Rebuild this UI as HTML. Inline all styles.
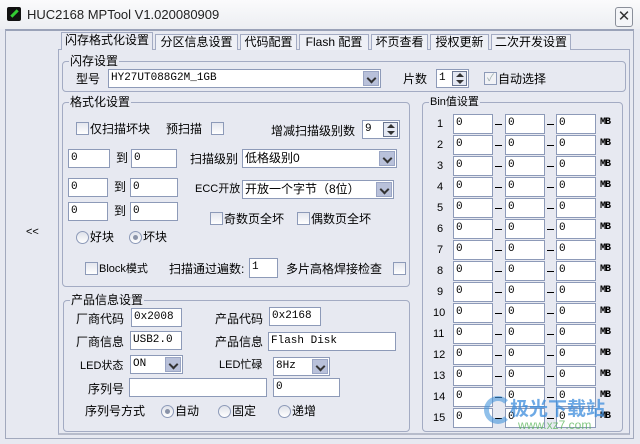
<!DOCTYPE html>
<html><head><meta charset="utf-8"><style>
*{box-sizing:border-box;margin:0;padding:0}
body{width:640px;height:444px;overflow:hidden;background:#e7e9f1;font-family:"Liberation Sans","Noto Sans CJK SC",sans-serif;font-size:12px;color:#000;position:relative}
.a{position:absolute;white-space:nowrap}
.t{position:absolute;white-space:nowrap;line-height:14px;font-size:12px}
.in{position:absolute;background:#fff;border:1px solid #8d9ab8;font-family:"Liberation Mono","Noto Sans CJK SC",monospace;font-size:11px;line-height:16px;padding-left:2px;overflow:hidden;white-space:nowrap}
.gb{position:absolute;border:1px solid #a3abc3;border-radius:4px}
.gl{position:absolute;background:#e7e9f1;padding:0 1px;line-height:14px;top:-8px;left:6px;white-space:nowrap}
.cb{position:absolute;width:13px;height:13px;border:1px solid #8d9ab8;background:linear-gradient(#e4e6ee,#fff)}
.rd{position:absolute;width:13px;height:13px;border:1px solid #8d9ab8;border-radius:50%;background:linear-gradient(#dfe2ea,#fff)}
.rd.on::after{content:"";position:absolute;left:3px;top:3px;width:5px;height:5px;border-radius:50%;background:#8a93a8}
.dd{position:absolute;right:1px;top:1px;bottom:1px;width:16px;background:#b9c1da;border:1px solid #9aa5c4}
.dd::after{content:"";position:absolute;left:4px;top:3px;width:5px;height:5px;border-right:2px solid #333;border-bottom:2px solid #333;transform:rotate(45deg)}
.sp{position:absolute;right:1px;top:1px;bottom:1px;width:15px;border:1px solid #6a7690;background:#e4e8f2}
.sp::before{content:"";position:absolute;left:3px;top:1px;border:4px solid transparent;border-bottom:4px solid #333;border-top:0}
.sp::after{content:"";position:absolute;left:3px;bottom:1px;border:4px solid transparent;border-top:4px solid #333;border-bottom:0}
.tab{position:absolute;top:34px;height:16px;border:1px solid #a3abc3;border-bottom:none;background:#eef0f6;line-height:15px;text-align:center;font-size:12px;white-space:nowrap;overflow:hidden}
.mb{position:absolute;font-family:"Liberation Mono",monospace;font-size:10px;font-weight:bold;letter-spacing:-1px}
.ds{position:absolute;width:7px;height:1px;background:#000}
</style></head><body>
<div class="a" style="left:0;top:0;width:640px;height:29px;background:linear-gradient(#fbfbfc,#eceef2)"></div>
<div class="a" style="left:7px;top:7px;width:14px;height:14px;background:#111;border-radius:2px"><div style="position:absolute;left:3px;top:5px;width:9px;height:3px;background:#3c3;transform:rotate(-45deg)"></div></div>
<div class="a" style="left:27px;top:7px;font-size:13px;color:#222;line-height:16px">HUC2168 MPTool V1.020080909</div>
<div class="a" style="left:615px;top:7px;width:18px;height:20px;border:1px solid #8a8f9a;border-radius:3px;background:#f4f5f8;text-align:center;line-height:18px;font-size:15px;color:#333">✕</div>
<div class="a" style="left:5px;top:29px;width:629px;height:410px;border:1px solid #a2a9bd;border-top:2px solid #9aa2b8"></div>
<div class="a" style="left:26px;top:226px;font-size:11px">&lt;&lt;</div>

<div class="a" style="left:58px;top:49px;width:572px;height:386px;border:1px solid #a3abc3;border-bottom:2px solid #b7bccb"></div>
<div class="tab" style="left:61px;width:92px;top:32px;height:18px;background:#e7e9f1">闪存格式化设置</div>
<div class="tab" style="left:155px;width:83px">分区信息设置</div>
<div class="tab" style="left:240px;width:57px">代码配置</div>
<div class="tab" style="left:299px;width:70px">Flash 配置</div>
<div class="tab" style="left:371px;width:57px">坏页查看</div>
<div class="tab" style="left:430px;width:59px">授权更新</div>
<div class="tab" style="left:491px;width:80px">二次开发设置</div>

<div class="gb" style="left:62px;top:61px;width:564px;height:31px"><span class="gl">闪存设置</span></div>
<div class="t" style="left:76px;top:72px">型号</div>
<div class="in" style="left:108px;top:69px;width:273px;height:19px">HY27UT088G2M_1GB<span class="dd"></span></div>
<div class="t" style="left:403px;top:72px">片数</div>
<div class="in" style="left:436px;top:69px;width:33px;height:19px">1<span class="sp"></span></div>
<div class="cb" style="left:484px;top:72px;background:#f1f2f6;color:#9aa;font-size:10px;line-height:11px;text-align:center">✓</div>
<div class="t" style="left:498px;top:72px">自动选择</div>

<div class="gb" style="left:62px;top:102px;width:348px;height:185px"><span class="gl">格式化设置</span></div>
<div class="cb" style="left:76px;top:122px"></div><div class="t" style="left:90px;top:122px">仅扫描坏块</div>
<div class="t" style="left:166px;top:122px">预扫描</div><div class="cb" style="left:211px;top:122px"></div>
<div class="t" style="left:271px;top:124px">增减扫描级别数</div>
<div class="in" style="left:362px;top:120px;width:38px;height:19px">9<span class="sp"></span></div>
<div class="in" style="left:68px;top:149px;width:42px;height:19px">0</div><div class="t" style="left:116px;top:151px">到</div><div class="in" style="left:131px;top:149px;width:46px;height:19px">0</div>
<div class="in" style="left:68px;top:178px;width:40px;height:19px">0</div><div class="t" style="left:114px;top:180px">到</div><div class="in" style="left:130px;top:178px;width:48px;height:19px">0</div>
<div class="in" style="left:68px;top:202px;width:40px;height:19px">0</div><div class="t" style="left:114px;top:204px">到</div><div class="in" style="left:130px;top:202px;width:48px;height:19px">0</div>
<div class="t" style="left:190px;top:152px">扫描级别</div>
<div class="in" style="left:242px;top:149px;width:155px;height:19px;font-family:'Liberation Sans','Noto Sans CJK SC',sans-serif;font-size:12px">低格级别0<span class="dd"></span></div>
<div class="t" style="left:195px;top:182px;font-size:11px">ECC开放</div>
<div class="in" style="left:242px;top:180px;width:152px;height:19px;font-family:'Liberation Sans','Noto Sans CJK SC',sans-serif;font-size:12px">开放一个字节（8位）<span class="dd"></span></div>
<div class="cb" style="left:210px;top:212px"></div><div class="t" style="left:224px;top:212px">奇数页全坏</div>
<div class="cb" style="left:297px;top:212px"></div><div class="t" style="left:311px;top:212px">偶数页全坏</div>
<div class="rd" style="left:76px;top:231px"></div><div class="t" style="left:90px;top:230px">好块</div>
<div class="rd on" style="left:129px;top:231px"></div><div class="t" style="left:143px;top:230px">坏块</div>
<div class="cb" style="left:85px;top:262px"></div><div class="t" style="left:99px;top:262px;font-size:11px">Block模式</div>
<div class="t" style="left:169px;top:262px">扫描通过遍数:</div>
<div class="in" style="left:249px;top:258px;width:29px;height:20px">1</div>
<div class="t" style="left:286px;top:262px">多片高格焊接检查</div><div class="cb" style="left:393px;top:262px"></div>

<div class="gb" style="left:63px;top:300px;width:347px;height:132px"><span class="gl">产品信息设置</span></div>
<div class="t" style="left:76px;top:312px">厂商代码</div><div class="in" style="left:131px;top:308px;width:51px;height:19px">0x2008</div>
<div class="t" style="left:215px;top:312px">产品代码</div><div class="in" style="left:269px;top:307px;width:52px;height:19px">0x2168</div>
<div class="t" style="left:76px;top:335px">厂商信息</div><div class="in" style="left:130px;top:331px;width:52px;height:19px">USB2.0</div>
<div class="t" style="left:215px;top:335px">产品信息</div><div class="in" style="left:268px;top:332px;width:128px;height:19px">Flash Disk</div>
<div class="t" style="left:80px;top:359px;font-size:11px">LED状态</div><div class="in" style="left:130px;top:355px;width:53px;height:19px">ON<span class="dd"></span></div>
<div class="t" style="left:219px;top:358px;font-size:11px">LED忙碌</div><div class="in" style="left:273px;top:357px;width:57px;height:19px">8Hz<span class="dd"></span></div>
<div class="t" style="left:88px;top:382px">序列号</div><div class="in" style="left:129px;top:378px;width:138px;height:19px"></div><div class="in" style="left:273px;top:378px;width:67px;height:19px">0</div>
<div class="t" style="left:85px;top:404px">序列号方式</div>
<div class="rd on" style="left:161px;top:405px"></div><div class="t" style="left:175px;top:404px">自动</div>
<div class="rd" style="left:218px;top:405px"></div><div class="t" style="left:232px;top:404px">固定</div>
<div class="rd" style="left:278px;top:405px"></div><div class="t" style="left:292px;top:404px">递增</div>

<div class="gb" style="left:422px;top:102px;width:201px;height:330px"><span class="gl" style="font-size:11px">Bin值设置</span></div>
<div id="bins"></div>
<script>
var h='';for(var i=0;i<15;i++){var y=114+i*21;h+='<div class="t" style="left:'+(i<9?437:433)+'px;top:'+(y+3)+'px;font-size:11px">'+(i+1)+'</div>'+
'<div class="in" style="left:453px;top:'+y+'px;width:40px;height:20px">0</div><div class="ds" style="left:495px;top:'+(y+10)+'px"></div>'+
'<div class="in" style="left:505px;top:'+y+'px;width:40px;height:20px">0</div><div class="ds" style="left:547px;top:'+(y+10)+'px"></div>'+
'<div class="in" style="left:556px;top:'+y+'px;width:40px;height:20px">0</div><div class="mb" style="left:600px;top:'+(y+3)+'px">MB</div>';}
document.getElementById('bins').innerHTML=h;
</script>
<div class="a" style="left:510px;top:394px;font-size:19px;font-weight:bold;color:rgba(60,140,220,.75)">极光下载站</div>
<div class="a" style="left:518px;top:418px;font-size:12px;color:rgba(90,180,90,.75)">www.xz7.com</div>
<div class="a" style="left:484px;top:396px;width:28px;height:28px;border-radius:50%;border:5px solid rgba(70,150,220,.6);border-right-color:transparent"></div>
</body></html>
